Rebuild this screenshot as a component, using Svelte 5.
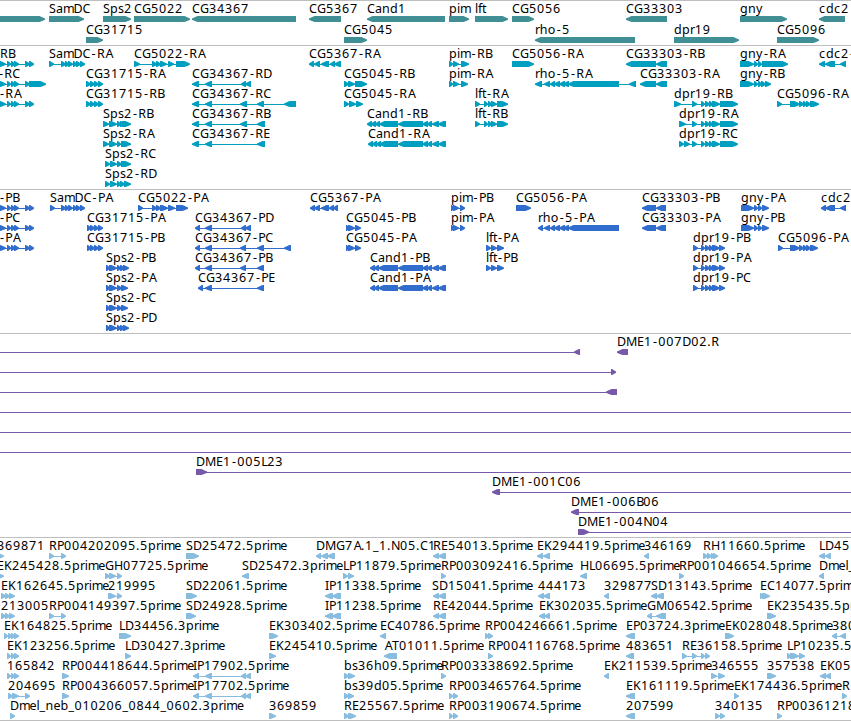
<script>
  // Pixel advance of each character in the label face.
  const advances = {
    C: 8, G: 9, S: 7, D: 9, R: 8, P: 7, A: 8, B: 7, E: 7, K: 8, L: 6, H: 9,
    I: 4, M: 11, N: 9, T: 7, a: 7, b: 8, c: 7, d: 8, e: 7, f: 4, g: 8, h: 8,
    i: 3, l: 3, m: 10.6, n: 8, o: 8, p: 8, r: 4.7, s: 6, t: 4, y: 7,
    '-': 6.3, '.': 4, _: 6
  };
  const nudge = { '-': 1, A: 0.7 };

  function glyphX(label, x) {
    const out = [];
    for (const ch of label) {
      out.push((x + (nudge[ch] ?? 0)).toFixed(1));
      x += advances[ch] ?? 8;
    }
    return out.join(' ');
  }

  // Each line: row | label x | label | strand | exon ranges | optional line extent
  function parse(text) {
    return text.trim().split('\n').map((line) => {
      const [row, x, label, strand, ranges, extent] = line.trim().split('|');
      const exons = ranges ? ranges.split(' ').map((r) => r.split(':').map(Number)) : [];
      const span = extent
        ? extent.split(':').map(Number)
        : [exons[0][0], exons[exons.length - 1][1] - 1];
      return { row: +row, x: +x, label, strand, exons, span };
    });
  }

  // The head bulges slightly, so short exons still read as solid wedges.
  function exonPoints([a, b], strand, y) {
    const head = Math.min(5.5, b - a - 1);
    const outline = [
      [0, 0], [b - a - head, 0], [b - a - head * 0.4, 1.4], [b - a, 2.6],
      [b - a, 3.8], [b - a - head * 0.4, 4.8], [b - a - head, 6], [0, 6]
    ];
    return outline
      .map(([dx, dy]) => `${strand === '>' ? a + dx : b - dx},${y + dy}`)
      .join(' ');
  }

  const left = '-2:6 7:11 11:15 14:19 25:30 29:34';
  const samdc = '61:66 65:69 68:73 73:77 76:81 80:85';
  const cand = '398:423 422:428 427:432 432:439 438:446';
  const rho = '544:550 550:555 554:560 559:565 563:569 568:619';
  const dpr = '701:705 705:710 709:713 712:720';
  const cg5096 = '790:800 799:804 803:807 806:811';

  const tracks = [
    {
      name: 'genes', height: 45, pitch: 21, features: parse(`
        0|0||>|-5:45
        0|49|SamDC|>|49:84
        0|103|Sps2|>|103:131
        0|134|CG5022|>|134:190
        0|192|CG34367|<|192:296
        0|309|CG5367|<|309:341
        0|367|Cand1|<|367:445
        0|449|pim|>|449:469
        0|475|lft|>|475:508
        0|512|CG5056|>|512:534
        0|626|CG33303|<|626:667
        0|740|gny|>|740:787
        0|819|cdc2|<|819:845
        1|86|CG31715|>|86:103
        1|344|CG5045|>|344:367
        1|535|rho-5|<|535:635
        1|674|dpr19|>|674:739
        1|777|CG5096|>|777:819`)
    },
    {
      name: 'transcripts', height: 144, pitch: 20, features: parse(`
        0|0|RB|>|${left}
        1|-2|-RC|>|-2:6 7:11 11:15 14:19 25:30 29:46
        2|-1|-RA|>|${left}
        0|49|SamDC-RA|>|49:54 ${samdc}
        0|134|CG5022-RA|>|134:140 152:157 156:161 160:167 168:174 176:190
        1|86|CG31715-RA|>|86:91 90:95 94:99 98:103
        2|86|CG31715-RB|>|86:91 90:95 94:99 98:103
        3|103|Sps2-RB|>|103:109 109:117 117:121 120:124 122:131
        4|103|Sps2-RA|>|103:109 109:117 117:121 121:131
        5|105|Sps2-RC|>|105:110 110:117 117:122 121:131
        6|105|Sps2-RD|>|105:110 110:117 117:121 120:125 124:131
        1|192|CG34367-RD|<|192:199 205:212 241:246 245:251
        2|192|CG34367-RC|<|192:199 205:212 240:247 257:264 284:296
        3|192|CG34367-RB|<|192:199 205:212 240:247 257:265
        4|192|CG34367-RE|<|192:199 205:212 257:265
        0|309|CG5367-RA|<|309:314 314:320 321:329 330:335 334:341
        1|344|CG5045-RB|>|344:349 348:355 355:367
        2|344|CG5045-RA|>|344:349 349:356 356:363
        3|367|Cand1-RB|<|367:372 371:376 375:380 379:398 ${cand}
        4|368|Cand1-RA|<|368:373 372:377 376:381 379:398 ${cand}
        0|449|pim-RB|>|449:453 453:459 461:469
        1|449|pim-RA|>|449:453 453:459 461:468
        2|475|lft-RA|>|475:480 484:488 488:492 491:497 497:508
        3|475|lft-RB|>|475:480 484:488 488:492 491:497 497:508
        0|512|CG5056-RA|>|512:534
        1|535|rho-5-RA|<|535:542 ${rho} 629:636
        0|626|CG33303-RB|<|626:656 656:667
        1|640|CG33303-RA|<|640:656 656:667
        2|674|dpr19-RB|>|674:681 692:697 ${dpr} 720:738
        3|679|dpr19-RA|>|679:686 692:697 ${dpr} 720:738
        4|679|dpr19-RC|>|679:684 684:690 692:697 ${dpr} 720:738
        0|740|gny-RA|>|740:754 754:758 758:762 762:788
        1|740|gny-RB|>|740:754 754:758 758:762 761:766 765:771
        2|777|CG5096-RA|>|777:782 ${cg5096} 810:819
        0|819|cdc2-RA|<|819:825 825:835 840:846`)
    },
    {
      name: 'proteins', height: 144, pitch: 20, features: parse(`
        0|-1|-PB|>|${left}
        1|-1|-PC|>|${left}
        2|-1|-PA|>|${left}
        0|50|SamDC-PA|>|50:55 ${samdc}
        0|138|CG5022-PA|>|138:143 152:157 156:161 160:168 168:175 176:188
        1|87|CG31715-PA|>|87:91 90:95 94:99 98:103
        2|87|CG31715-PB|>|87:91 90:95 94:99 98:103
        3|106|Sps2-PB|>|106:110 109:117 117:121 120:125 123:129
        4|106|Sps2-PA|>|106:110 109:117 117:122 121:128
        5|106|Sps2-PC|>|106:110 109:117 117:122 121:128
        6|106|Sps2-PD|>|106:110 109:117 117:121 120:125 123:129
        1|195|CG34367-PD|<|195:200 205:212 241:246 245:251
        2|195|CG34367-PC|<|195:200 205:212 240:246 257:264 284:291
        3|195|CG34367-PB|<|195:200 205:212 240:246 257:264
        4|198|CG34367-PE|<|198:203 205:212 257:264
        0|310|CG5367-PA|<|310:315 314:320 321:329 329:334 333:338
        1|346|CG5045-PB|>|346:349 348:355 355:361
        2|346|CG5045-PA|>|346:349 348:355 355:361
        3|370|Cand1-PB|<|370:375 374:379 378:398 ${cand}
        4|370|Cand1-PA|<|370:375 374:379 378:398 ${cand}
        0|451|pim-PB|>|451:454 453:459 460:465
        1|451|pim-PA|>|451:454 453:459 460:465
        2|486|lft-PA|>|486:491 491:497 497:504
        3|486|lft-PB|>|486:491 491:497 497:504
        0|516|CG5056-PA|>|516:531
        1|538|rho-5-PA|<|538:543 ${rho}
        0|642|CG33303-PB|<|642:656 656:666
        1|642|CG33303-PA|<|642:656 656:666
        2|693|dpr19-PB|>|693:698 ${dpr} 719:725
        3|693|dpr19-PA|>|693:698 ${dpr} 719:725
        4|693|dpr19-PC|>|693:698 ${dpr} 719:725
        0|741|gny-PA|>|741:754 754:758 758:762 762:769
        1|741|gny-PB|>|741:754 754:758 758:762 762:769
        2|778|CG5096-PA|>|778:783 ${cg5096} 810:818
        0|821|cdc2-PA|<|821:826 825:835 840:846`)
    },
    {
      name: 'clones', height: 204, pitch: 20, features: parse(`
        0|0||<|574:580|0:576
        0|617|DME1-007D02.R|<|617:628
        1|0||>|611:616|0:612
        2|0||<|606:617|0:607
        3|0||>||0:851
        4|0||>||0:851
        5|0||>||0:851
        6|196|DME1-005L23|>|196:207|200:851
        7|492|DME1-001C06|<|492:500|495:851
        8|571|DME1-006B06|<|571:579|575:851
        9|578|DME1-004N04|>|578:589|580:851`)
    },
    {
      name: 'ests', height: 183, pitch: 20, features: parse(`
        0|-3|369871|>|-3:4
        0|49|RP004202095.5prime|>|49:54 61:66
        0|186|SD25472.5prime|>|186:199
        0|316|DMG7A.1_1.N05.C1|<|316:321 321:328 327:335
        0|433|RE54013.5prime|<|433:439 438:446
        0|537|EK294419.5prime|<|537:543 543:550
        0|644|346169|<|644:649
        0|703|RH11660.5prime|>|703:708 707:712 711:714 713:718
        0|819|LD45|<|819:825 825:831
        1|-3|EK245428.5prime|>|-3:4
        1|105|GH07725.5prime|>|105:110 109:116 117:122
        1|242|SD25472.3prime|<|242:249
        1|343|LP11879.5prime|>|343:348 348:354
        1|441|RP003092416.5prime|>|441:446
        1|580|HL06695.5prime|<|580:587
        1|679|RP001046654.5prime|>|679:684
        1|819|Dmel_|<|819:824
        2|1|EK162645.5prime|>|1:6 5:10 9:15
        2|108|219995|>|108:116 117:122
        2|186|SD22061.5prime|>|186:197
        2|325|IP11338.5prime|<|325:333 332:341
        2|432|SD15041.5prime|<|433:439 438:446
        2|538|444173|<|538:544 543:550
        2|604|329877|<|604:609
        2|651|SD13143.5prime|<|651:657 656:664
        2|760|EC14077.5prime|>|760:763 762:770
        3|1|213005|>|1:6 5:10 9:15
        3|49|RP004149397.5prime|>|49:54 61:66
        3|186|SD24928.5prime|>|186:196
        3|325|IP11238.5prime|<|325:333 332:341
        3|433|RE42044.5prime|<|433:439 438:446
        3|539|EK302035.5prime|<|539:545 544:550
        3|647|GM06542.5prime|<|647:652 656:666
        3|767|EK235435.5prime|>|767:776
        4|4|EK164825.5prime|>|4:8 8:12 11:15 14:19
        4|119|LD34456.3prime|>|119:131
        4|269|EK303402.5prime|>|269:278
        4|380|EC40786.5prime|<|380:386
        4|485|RP004246661.5prime|>|485:489 488:493
        4|626|EP03724.3prime|<|626:635
        4|725|EK028048.5prime|>|725:734
        4|832|380|<|832:837 840:846
        5|7|EK123256.5prime|>|7:11 11:15 14:19
        5|125|LD30427.3prime|>|125:131
        5|269|EK245410.5prime|>|269:276
        5|384|AT01011.5prime|<|384:397
        5|488|RP004116768.5prime|>|488:493
        5|626|483651|<|626:634
        5|682|RE36158.5prime|>|682:687 692:697 701:705 705:710
        5|787|LP10235.5prime|>|787:791 790:799 799:805
        6|7|165842|>|7:11 11:15 14:19
        6|62|RP004418644.5prime|>|62:69
        6|193|IP17902.5prime|<|193:199 205:212 241:246 245:251
        6|344|bs36h09.5prime|>|344:349 348:355
        6|441|RP003338692.5prime|>|441:446
        6|604|EK211539.5prime|<|604:609
        6|711|346555|>|711:717 718:725
        6|767|357538|>|767:776
        6|820|EK05|<|820:826 825:831
        7|8|204695|>|8:13 12:19 25:30
        7|62|RP004366057.5prime|>|62:69
        7|193|IP17702.5prime|<|193:199 205:212 241:246 245:251
        7|344|bs39d05.5prime|>|344:349 348:354
        7|449|RP003465764.5prime|>|449:453 453:458
        7|626|EK161119.5prime|<|626:635
        7|734|EK174436.5prime|>|734:739
        7|842|R|>|842:847
        8|10|Dmel_neb_010206_0844_0602.3prime|>|10:15
        8|269|369859|>|269:276
        8|344|RE25567.5prime|>|344:349 348:356
        8|449|RP003190674.5prime|>|449:453 453:458
        8|626|207599|<|626:635
        8|715|340135|>|715:720 720:725
        8|777|RP00361218|>|777:782`)
    }
  ];
</script>

<main class="browser">
  {#each tracks as track}
    <section class="track {track.name}">
      <svg width="851" height={track.height - 1} viewBox="0 1 851 {track.height - 1}">
        {#each track.features as f}
          {@const y = 16 + f.row * track.pitch}
          <rect x={f.span[0]} y={y + 3} width={f.span[1] - f.span[0]} height="1" />
          {#each f.exons as exon}
            <polygon points={exonPoints(exon, f.strand, y)} />
          {/each}
        {/each}
        {#each track.features as f}
          {#if f.label}
            <text x={glyphX(f.label, f.x)} y={13 + f.row * track.pitch}>{f.label}</text>
          {/if}
        {/each}
      </svg>
    </section>
  {/each}
</main>

<style>
  :global(body) {
    background: #fff;
  }

  .browser {
    display: flex;
    flex-direction: column;
    width: 851px;
    height: 721px;
    overflow: hidden;
    box-sizing: border-box;
    border-bottom: 1px solid #bebebe;
  }

  .track {
    flex: none;
    border-top: 1px solid #bebebe;
  }

  svg {
    display: block;
  }

  text {
    fill: #000;
    font-family: 'Noto Sans', 'DejaVu Sans', sans-serif;
    font-size: 12.5px;
  }

  .genes { fill: #3f8f94; }
  .transcripts { fill: #009fbf; }
  .proteins { fill: #316dcd; }
  .clones { fill: #7659a8; }
  .ests { fill: #88bddf; }
</style>
